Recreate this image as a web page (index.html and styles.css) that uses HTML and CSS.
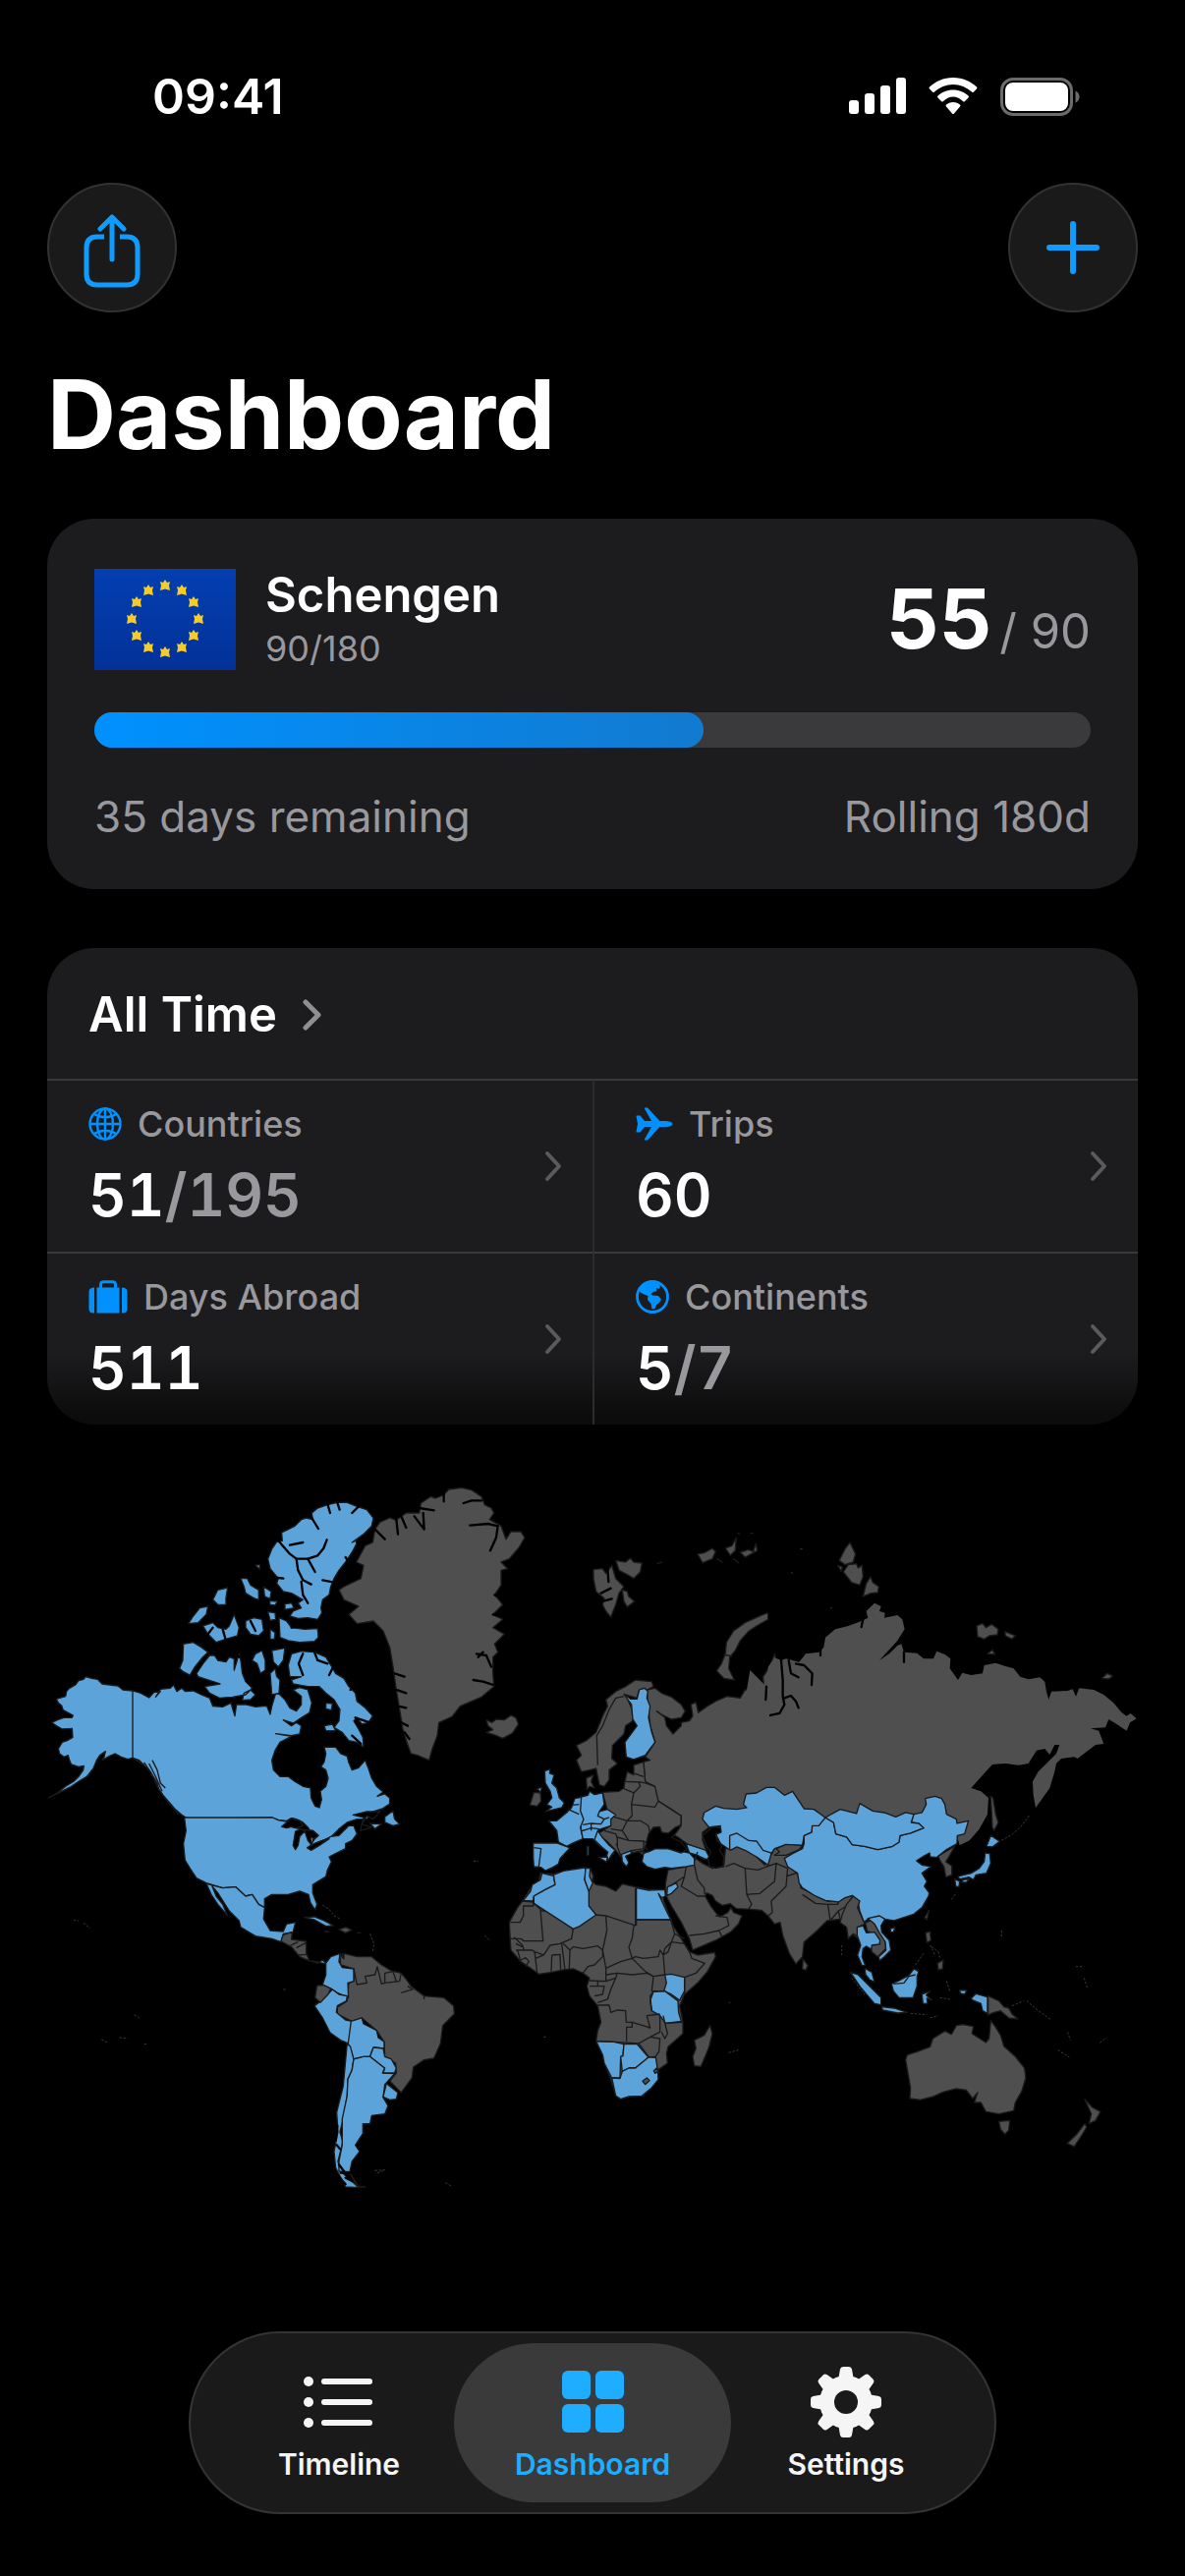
FILE: index.html
```
<!DOCTYPE html>
<html lang="en">
<head>
    <meta charset="UTF-8">
    <meta name="viewport" content="width=device-width, initial-scale=1.0">
    <title>Dashboard</title>
    <link rel="stylesheet" href="styles.css">
</head>
<body>
    <!-- status bar -->
    <div class="status-bar">
        <span class="time">09:41</span>
        <div class="status-icons">
            <svg width="58" height="38" viewBox="0 0 58 38" fill="#fff">
                <rect x="0" y="23" width="10" height="14" rx="3"/>
                <rect x="16" y="16" width="10" height="21" rx="3"/>
                <rect x="32" y="8" width="10" height="29" rx="3"/>
                <rect x="48" y="0" width="10" height="37" rx="3"/>
            </svg>
            <svg width="50" height="38" viewBox="0 0 50 38" fill="#fff">
                <path d="M25 0C35 0 43 4 49 9.500Q50 10.500 49 11.500L46 14.500Q45 15.500 44 14.500C39 10 32 7 25 7S11 10 6 14.500Q5 15.500 4 14.500L1 11.500Q0 10.500 1 9.500C7 4 15 0 25 0Z"/>
                <path d="M25 12.500C31.500 12.500 36.500 15 40.500 18.500Q41.500 19.500 40.500 20.500L37 24Q36 25 35 24C32 21.500 29 19.500 25 19.500S18 21.500 15 24Q14 25 13 24L9.500 20.500Q8.500 19.500 9.500 18.500C13.500 15 18.500 12.500 25 12.500Z"/>
                <path d="M25 25C28 25 30 26 32 27.500Q33 28.500 32 29.500L26 36.500Q25 37.500 24 36.500L18 29.500Q17 28.500 18 27.500C20 26 22 25 25 25Z"/>
            </svg>
            <svg width="82" height="39" viewBox="0 0 82 39">
                <rect x="1.500" y="1.500" width="71" height="36" rx="11.500" fill="none" stroke="#6b6b6b" stroke-width="3"/>
                <rect x="5" y="5" width="64" height="29" rx="8" fill="#fff"/>
                <path d="M76.500 13.500C79 14.500 80.500 16.500 80.500 19.500S79 24.500 76.500 25.500Z" fill="#6b6b6b"/>
            </svg>
        </div>
    </div>

    <!-- toolbar -->
    <header class="toolbar">
        <button class="round-button" aria-label="Share">
            <svg width="60" height="82" viewBox="0 -6 60 82" fill="none" stroke="#109bff" stroke-width="5" stroke-linecap="round" stroke-linejoin="round">
                <path d="M30 47V4M18 16L30 4L42 16"/>
                <path stroke-linecap="butt" d="M22 24H15Q4 24 4 35V62Q4 73 15 73H45Q56 73 56 62V35Q56 24 45 24H38"/>
            </svg>
        </button>
        <button class="round-button" aria-label="Add trip">
            <svg width="54" height="54" viewBox="0 0 54 54" fill="none" stroke="#109bff" stroke-width="6" stroke-linecap="round">
                <path d="M27 3V51M3 27H51"/>
            </svg>
        </button>
    </header>

    <main>
        <h1>Dashboard</h1>

        <section class="card schengen">
            <div class="schengen-top">
                <svg class="flag" width="144" height="103" viewBox="0 0 144 103">
                    <defs>
                        <linearGradient id="flagBlue" x1="0" y1="0" x2="0" y2="1">
                            <stop offset="0" stop-color="#043fb0"/>
                            <stop offset="1" stop-color="#023199"/>
                        </linearGradient>
                        <path id="star" d="M0 -6L2 -3L5 -4L4 0L5 5L0 3.500L-5 5L-4 0L-5 -4L-2 -3Z" fill="#f5cd2a"/>
                    </defs>
                    <rect width="144" height="103" fill="url(#flagBlue)"/>
                    <use href="#star" x="72" y="17"/>
                    <use href="#star" x="89" y="22"/>
                    <use href="#star" x="101" y="34"/>
                    <use href="#star" x="106" y="51"/>
                    <use href="#star" x="101" y="68"/>
                    <use href="#star" x="89" y="80"/>
                    <use href="#star" x="72" y="85"/>
                    <use href="#star" x="55" y="80"/>
                    <use href="#star" x="43" y="68"/>
                    <use href="#star" x="38" y="51"/>
                    <use href="#star" x="43" y="34"/>
                    <use href="#star" x="55" y="22"/>
                </svg>
                <div class="zone">
                    <h2>Schengen</h2>
                    <p>90/180</p>
                </div>
                <div class="used"><strong>55</strong><span>/ 90</span></div>
            </div>
            <div class="progress" role="progressbar" aria-label="Days used" aria-valuenow="55" aria-valuemin="0" aria-valuemax="90">
                <div class="progress-fill" style="width: 61.1%"></div>
            </div>
            <div class="schengen-bottom">
                <span>35 days remaining</span>
                <span>Rolling 180d</span>
            </div>
        </section>

        <section class="card stats">
            <a class="stats-title" href="#">
                <h2>All Time</h2>
                <svg width="20" height="32" viewBox="0 0 20 32" fill="none" stroke="#8e8e93" stroke-width="5" stroke-linecap="round" stroke-linejoin="round"><path d="M3 3L16 16L3 29"/></svg>
            </a>
            <div class="stats-grid">
                <a class="stat" href="#">
                    <div>
                        <p class="stat-label">
                            <svg width="34" height="34" viewBox="0 0 34 34" fill="none" stroke="#0091ff" stroke-width="2.400">
                                <circle cx="17" cy="17" r="15.500"/>
                                <ellipse cx="17" cy="17" rx="8" ry="15.500"/>
                                <path d="M17 1V33M1 17H33M5 6.500Q17 14 29 6.500M5 27.500Q17 20 29 27.500"/>
                            </svg>
                            Countries
                        </p>
                        <p class="stat-value">51<span>/195</span></p>
                    </div>
                    <svg class="chevron" width="20" height="32" viewBox="0 0 20 32"><path d="M4 3L16 16L4 29"/></svg>
                </a>
                <a class="stat" href="#">
                    <div>
                        <p class="stat-label">
                            <svg width="38" height="34" viewBox="0 0 38 34" fill="#0091ff">
                                <path d="M1 8.500H4.500L9 14H16L9 1.500Q8.700 0.500 9.500 0.500H12L24.500 14H31Q37.500 14.500 37.500 17T31 20H24.500L12 33.500H9.500Q8.700 33.500 9 32.500L16 20H9L4.500 25.500H1Q0.500 25.500 0.500 25L2 17L0.500 9Q0.500 8.500 1 8.500Z"/>
                            </svg>
                            Trips
                        </p>
                        <p class="stat-value">60</p>
                    </div>
                    <svg class="chevron" width="20" height="32" viewBox="0 0 20 32"><path d="M4 3L16 16L4 29"/></svg>
                </a>
                <a class="stat" href="#">
                    <div>
                        <p class="stat-label">
                            <svg width="40" height="34" viewBox="0 0 40 34" fill="#0091ff">
                                <path d="M6 7.500V33.500H5Q0.500 33.500 0.500 29V12Q0.500 7.500 6 7.500ZM34 7.500V33.500H35Q39.500 33.500 39.500 29V12Q39.500 7.500 34 7.500ZM8.500 7.500H31.500V33.500H8.500Z"/>
                                <path d="M12.500 8V4.500Q12.500 1.700 15.500 1.700H24.500Q27.500 1.700 27.500 4.500V8" fill="none" stroke="#0091ff" stroke-width="3"/>
                            </svg>
                            Days Abroad
                        </p>
                        <p class="stat-value">511</p>
                    </div>
                    <svg class="chevron" width="20" height="32" viewBox="0 0 20 32"><path d="M4 3L16 16L4 29"/></svg>
                </a>
                <a class="stat" href="#">
                    <div>
                        <p class="stat-label">
                            <svg width="34" height="34" viewBox="0 0 34 34">
                                <circle cx="17" cy="17" r="15.500" fill="none" stroke="#0091ff" stroke-width="2.800"/>
                                <path fill="#0091ff" d="M3 11L8 4L17 1L22 2.500L25 6L24 9L21 8L21.500 11L18 12L15.500 14L17 15.500L23 16L26 19.500L24 23L21 25L19.500 29L16.500 29.500L15.500 24L12 20L12.500 16L9.500 15L5.500 13Z"/>
                            </svg>
                            Continents
                        </p>
                        <p class="stat-value">5<span>/7</span></p>
                    </div>
                    <svg class="chevron" width="20" height="32" viewBox="0 0 20 32"><path d="M4 3L16 16L4 29"/></svg>
                </a>
            </div>
        </section>

        <!-- world map, visited countries are blue -->
        <svg class="map" viewBox="0 0 1110 740" role="img" aria-label="Visited countries">
            <!-- Canada and Alaska -->
            <g transform="translate(-18 -10) scale(.3333)">
                <path class="visited" d="M315,693L285,690 270,678 245,675 222,672 208,658 190,655 172,650 165,658 150,662 140,675 122,685 113,695 110,710 82,718 88,730 98,738 103,752 118,760 133,768 130,775 105,775 85,782 68,790 82,800 100,810 130,808 132,835 115,845 100,850 88,870 92,885 105,895 118,890 122,905 128,918 150,925 166,922 164,935 150,955 135,970 110,985 85,1005 58,1020 95,1002 125,987 150,970 175,955 195,930 205,905 215,890 232,878 228,895 222,905 245,892 262,885 280,895 300,902 315,898 335,905 350,920 365,935 378,955 390,975 395,995 410,1015 428,1035 445,1055 465,1072 485,1085 740,1080 760,1088 785,1090 800,1082 815,1085 835,1095 850,1110 860,1125 875,1135 868,1150 850,1170 885,1155 920,1140 945,1115 970,1095 1000,1085 1030,1085 1050,1062 1080,1052 1100,1038 1100,1020 1085,1008 1062,1015 1080,1002 1060,985 1045,960 1035,930 1025,905 1005,928 985,935 975,912 970,893 950,885 935,865 900,865 905,885 900,910 890,925 905,935 912,960 905,985 888,1000 892,1025 885,1050 872,1045 860,1020 858,990 835,985 810,970 790,955 765,955 745,935 740,905 750,875 765,850 800,832 752,824 800,830 825,825 830,800 815,790 800,800 775,782 805,792 835,772 855,760 862,730 850,690 825,683 805,690 830,710 830,735 815,755 795,745 780,720 765,705 752,700 740,740 735,765 725,740 715,740 690,742 660,735 632,735 627,770 615,730 590,742 560,740 550,715 525,705 500,693 475,695 465,685 450,695 440,675 430,685 400,688 385,712 400,695 380,698 365,714 340,700Z"/>
                <path class="visited" d="M770,210L790,200 810,190 830,170 845,165 865,170 862,150 880,135 910,125 940,118 970,118 1000,130 1030,140 1050,165 1045,190 1020,215 985,240 1005,232 985,270 965,300 945,325 930,350 920,375 915,400 895,415 890,440 893,455 880,475 850,470 820,472 795,465 805,450 830,440 820,425 835,415 800,395 775,390 755,365 760,350 735,320 728,290 740,260 755,238 772,235Z"/>
                <path class="visited" d="M762,470L785,480 800,500 840,505 880,503 882,530 870,542 825,545 790,540 765,530ZM510,640L530,610 550,585 565,585 575,600 600,605 610,590 625,595 625,630 640,580 645,600 650,640 660,665 680,685 660,705 620,712 580,715 550,700 535,680 582,672 545,660 515,650ZM470,550L500,545 525,560 545,575 525,595 505,620 490,645 470,635 458,625 468,600ZM530,495L560,485 575,500 600,505 610,495 625,460 640,500 635,525 600,535 570,545 545,520ZM485,488L500,465 520,440 545,435 540,460 515,485ZM660,480L685,470 710,475 715,510 700,525 675,520 660,500ZM735,505L750,515 748,535 735,535ZM645,350L665,350 675,370 700,385 700,415 685,410 660,395 655,375ZM575,385L605,378 600,410 600,430 575,430 560,415ZM715,375L738,390 735,412 718,405ZM690,310L703,308 703,322ZM728,452L750,455 752,475 735,478ZM733,418L757,420 750,432 735,430ZM780,428L800,425 808,440 780,445ZM740,570L780,562 775,600 760,620 745,605ZM690,580L710,570 720,600 720,630 705,640 695,610 680,600ZM735,640L750,625 755,650 765,660 762,700 740,705ZM655,700L675,690 690,705 675,720 650,722Z"/>
                <path class="visited" d="M800,580L830,572 870,575 905,590 920,615 935,640 960,655 975,680 995,700 1000,725 1025,745 1048,770 1035,790 1015,795 1000,775 990,785 1005,810 1018,835 1020,865 1000,850 975,845 955,820 930,805 945,785 948,750 930,720 905,700 885,680 850,680 805,672 800,660 830,650 795,650 790,615ZM905,730L925,732 922,752 905,748ZM900,800L925,795 935,815 905,815ZM1085,1078L1110,1060 1115,1085 1130,1100 1110,1105 1085,1095ZM1040,1098L1075,1100 1055,1115Z"/>
                <path class="water" stroke-width="11" d="M760,235L795,275 815,290 850,290 880,280 898,258 908,232M640,590L625,575 600,590M745,560H800"/>
                <path class="water" stroke-width="6" d="M850,290L872,330M815,290L820,325 835,355 860,368M830,360L835,400 850,425M862,165L882,198M795,248L835,240M910,122L918,150M940,118L947,140M985,150L1005,130M1000,240L1040,205M965,285L975,300M895,355L930,362M735,345L775,350M800,500L860,490M835,580L822,610 835,645M870,575L880,600 910,610M925,625L915,645M980,690L990,680M560,500L545,520M600,540L590,505M675,480L690,510M995,775L1040,790M985,830L1012,855"/>
                <path class="sea" d="M770,1108L785,1095 800,1082 825,1090 835,1105 815,1112 800,1108 785,1112ZM812,1122L830,1115 840,1122 825,1138 820,1165 812,1178 805,1165ZM840,1118L865,1120 882,1135 870,1145 858,1140 862,1165 850,1150 845,1135ZM848,1172L870,1160 890,1152 915,1145 885,1165 860,1180ZM988,1072L1030,1062 1070,1062 1050,1085 1030,1075 1015,1100 1045,1110 1010,1120 1020,1080Z"/>
                <path class="border" d="M315,693V898L350,920M375,905L390,935 400,975 415,990M365,915L385,955 405,1000M350,912L372,945 390,985 420,1030 455,1070"/>
            </g>
            <!-- USA, Central and South America -->
            <g transform="translate(-18 350) scale(.3333)">
                <path class="visited" d="M473,0L742,0 760,8 785,12 805,30 850,40 870,55 862,80 850,95 885,78 920,58 945,55 975,25 990,25 1000,50 985,70 965,80 965,95 935,110 915,120 922,135 910,160 905,180 865,205 865,230 878,265 872,282 858,260 852,235 825,225 790,235 740,235 718,248 718,275 700,265 680,235 660,240 630,212 590,215 540,200 510,185 490,155 475,130 470,80 478,40Z"/>
                <path class="sea" d="M770,28L785,15 800,2 825,10 835,25 815,32 800,28 785,32ZM812,42L830,35 840,42 825,58 820,85 812,98 805,85ZM840,38L865,40 882,55 870,65 858,60 862,85 850,70 845,55ZM848,92L870,80 890,72 915,65 885,85 860,100Z"/>
                <path class="visited" d="M540,202L590,215 630,212 660,240 680,235 700,265 718,275 715,310 735,345 775,348 785,325 812,320 805,350 775,355 768,380 740,370 690,362 645,335 640,315 610,285 575,230 558,210 570,240 590,265 605,300 575,265 555,235Z"/>
                <path class="other" d="M768,378L775,358 802,350 800,372 845,378 845,415 855,438 825,425 800,395ZM795,392L820,380M815,398L845,382M820,420L845,418M945,342L965,335 985,343 965,352ZM900,348H915M1000,352H1012"/>
                <path class="visited" d="M858,438L880,445 895,435 908,448 880,441ZM840,305L870,303 900,315 928,330 905,332 870,312Z"/>
                <path class="other" d="M948,415L960,432 960,415 1000,425 1045,425 1075,450 1105,468 1135,475 1155,500 1165,515 1205,545 1265,550 1295,575 1297,600 1262,635 1255,690 1235,735 1205,740 1172,762 1168,795 1135,840 1100,805 1120,780 1118,750 1085,730 1083,685 1060,650 1015,612 985,622 940,600 940,580 970,560 975,505 990,500 990,462 950,450Z"/>
                <path class="visited" d="M905,445L920,425 948,415 945,440 955,458 990,462 990,500 972,505 974,550 940,535 920,522 895,510 905,480Z"/>
                <path class="visited" d="M925,525L945,540 970,545 968,560 940,575 937,595 965,618 985,622 983,655 973,690 950,680 918,657 895,612 870,575 890,560Z"/>
                <path class="other" d="M878,513L898,512 920,522 912,540 888,565 872,550Z"/>
                <path class="visited" d="M982,622L1015,612 1020,630 1060,650 1065,672 1083,685 1083,705 1050,702 1040,730 1020,730 990,738 973,690Z"/>
                <path class="visited" d="M970,690L980,700 990,738 985,770 972,800 970,850 958,920 948,960 957,990 942,1050 950,1080 1005,1130 965,1128 935,1070 930,1020 942,960 938,900 958,820Z"/>
                <path class="visited" d="M990,738L1020,730 1040,730 1085,765 1078,780 1115,782 1085,815 1080,855 1095,880 1085,905 1045,910 1040,935 1018,935 1018,965 995,1000 1008,1020 985,1050 978,1082 945,1080 945,1050 955,1000 955,920 970,850 972,800 985,770Z"/>
                <path class="visited" d="M1040,730L1050,702 1080,705 1085,730 1105,738 1120,765 1115,780 1080,780 1085,765ZM1090,812L1125,840 1120,860 1100,862 1080,853ZM980,1088L1005,1128 1025,1128 1000,1125Z"/>
                <path class="border" d="M990,462L1000,510 1030,505 1025,485 1055,480 1062,455M1062,455L1075,508 1085,505 1085,475 1110,470M1085,505L1130,500 1135,475M1110,470L1120,500M1135,535L1170,525 1155,515M1205,545V555M955,430V415"/>
                <path class="water" stroke-width="5" d="M940,940L935,985M938,1000L948,1012M945,1060L975,1100M930,1080L965,1120M950,1085H975M965,1100L985,1110"/>
                <path class="islands" d="M135,312L150,316M165,322L185,338M895,268L915,280 930,300 950,310M1040,355L1052,385 1048,410M775,525H785M1055,1078L1085,1076 1065,1085ZM1270,1115L1288,1125M275,672L300,675M220,678L240,688M320,602L335,612M350,692H362"/>
            </g>
            <!-- Greenland, arctic islands, Europe -->
            <g transform="translate(352 -10) scale(.3333)">
                <path class="other" d="M-55,200L-40,178 -10,165 10,172 40,150 80,150 85,120 115,100 130,105 155,95 170,78 210,73 240,80 270,100 280,125 300,135 308,150 295,170 330,190 345,230 360,207 390,207 402,225 385,255 355,290 330,300 350,320 330,325 330,370 310,400 335,430 305,460 335,475 305,500 340,520 310,550 320,575 305,590 305,640 308,680 270,712 240,725 205,740 180,772 140,790 135,830 120,870 110,905 75,890 55,885 42,850 30,810 20,750 10,690 0,620 -10,560 -30,510 -60,480 -110,488 -135,460 -105,435 -150,415 -165,385 -150,375 -98,350 -90,310 -112,300 -85,250 -62,240Z"/>
                <path class="water" stroke-width="7" d="M10,170L15,215M25,160L40,195M65,160L95,200 92,150M80,135L125,142M155,90V115M215,120L240,112 270,112M235,188L290,183 320,190 315,225 297,265M255,580L285,585 300,620M245,660L275,665 305,675M260,590L275,575M-55,200L-25,230M5,640L35,650M10,690L40,700M15,740L40,745M25,790L45,800M35,820L50,840M310,400L335,410M305,460L325,465"/>
                <path class="other" d="M285,782L302,790 315,780 340,782 360,768 375,775 383,795 365,822 335,838 310,828 285,820 305,812 290,800Z"/>
                <path class="other" d="M612,322L640,320 650,335 668,310 680,350 705,375 690,395 680,430 665,468 650,450 640,430 645,410 620,390 612,350ZM680,295L710,300 725,288 735,300 760,303 755,330 735,350 715,338 690,325ZM700,385L715,390 720,405 737,420 715,437 705,420ZM930,275L950,272 975,258 985,268 975,290 945,302ZM1015,258L1035,250 1048,225 1045,265 1030,280ZM1060,270L1085,262 1100,268 1108,243 1112,265 1075,285ZM990,290L1005,300ZM1040,290L1055,302ZM1050,210L1060,215M1090,212H1100M805,305L822,300"/>
                <path class="water" stroke-width="6" d="M655,320L658,360M635,395L665,380M640,420L668,412"/>
                <path class="other" d="M1130,460L1145,455 1145,475 1110,495 1085,512 1060,540 1045,570 1028,590 1025,625 1042,660 1010,655 988,632 1003,610 1015,580 1018,545 1040,510 1075,485Z"/>
                <path class="border" d="M1010,582L1035,588"/>
                <!-- Russia west of the Urals -->
                <path class="other" d="M775,690L800,685 820,700 850,712 880,735 892,755 880,775 850,780 820,765 805,755 830,775 835,800 855,825 880,800 880,790 905,785 915,770 910,735 925,728 932,760 960,740 985,725 1020,710 1060,715 1075,690 1100,690 1125,710 1145,725 1133,690 1130,650 1150,620 1160,595 1165,580 1170,600 1185,605 1190,650 1190,700 1260,620 1260,1080 1110,1080 965,1110 945,1125 945,1150 958,1185 900,1162 870,1140 850,1130 830,1128 880,1100 880,1075 830,1060 800,1040 770,970 765,910 785,905 770,895 800,850 785,800 780,750Z"/>
                <path class="other" d="M560,860L590,845 620,820 640,770 655,740 650,720 680,695 710,680 740,660 790,665 795,680 775,690 765,685 750,695 745,715 710,705 730,750 732,785 710,800 705,825 690,840 670,860 668,900 685,915 660,935 660,965 645,985 630,980 620,930 600,935 575,940 560,905 575,890Z"/>
                <path class="border" d="M625,920L622,830 640,800 660,750 680,715 705,710"/>
                <path class="visited" d="M705,703L725,718 745,718 752,690 768,685 778,695 775,715 785,740 780,775 790,820 800,850 770,890 735,903 712,895 708,850 745,800 732,780 728,735Z"/>
                <path class="other" d="M590,960L612,950 605,970 615,990 600,985 592,995Z"/>
                <path class="visited" d="M463,938L480,932 478,945 492,950 485,975 500,990 508,1020 523,1035 515,1050 465,1062 485,1048 470,1040 485,1020 480,1000 465,975ZM440,992L455,988 450,1002Z"/>
                <path class="other" d="M430,1003L450,1005 452,1030 440,1045 418,1042Z"/>
                <!-- Eastern Europe and the Balkans -->
                <path class="other" d="M640,1003L690,1000 705,990 708,970 715,940 735,950 735,920 765,910 770,970 800,985 810,1030 880,1075 880,1100 850,1125 865,1120 835,1140 810,1115 790,1125 778,1150 765,1180 720,1190 695,1200 680,1180 650,1150 625,1130 665,1105 655,1060Z"/>
                <path class="border" d="M710,970L755,972 770,975M735,945L765,955M705,992L735,1005 755,985 750,972M735,1005L728,1040 730,1075 715,1090 665,1075M728,1040L800,1048 810,1030M770,975L800,985M810,1030L850,1055 880,1075 880,1100M715,1090L755,1090 780,1105 785,1130M715,1090L700,1120 665,1115M700,1120L720,1150 775,1155M645,1120L680,1130 690,1155 680,1165M690,1155L720,1160 715,1190"/>
                <path class="visited" d="M570,1018L595,1012 600,1000 615,1010 640,1005 645,1040 630,1062 655,1055 680,1072 665,1085 665,1105 635,1115 605,1120 575,1120 568,1070Z"/>
                <path class="visited" d="M475,1090L500,1090 530,1065 545,1050 555,1022 575,1018 572,1060 582,1085 572,1110 580,1145 550,1158 530,1168 505,1155 500,1120Z"/>
                <path class="visited" d="M575,1122L605,1112 628,1115 625,1130 635,1150 658,1175 675,1190 660,1200 655,1185 628,1165 610,1145 580,1145ZM592,1168H597V1195H592Z"/>
                <path class="border" d="M568,1070L535,1055M630,1062L625,1075 645,1085 660,1080M645,1085L635,1100 605,1098 580,1102M605,1098V1120M568,1040L545,1042"/>
            </g>
            <!-- Africa, Middle East, India -->
            <g transform="translate(432 350) scale(.3333)">
                <path class="visited" d="M188,78L260,78 300,93 270,125 265,142 248,152 225,162 212,152 190,150 188,120Z"/>
                <path class="border" d="M190,92L212,95 205,150"/>
                <path class="other" d="M445,60L480,70 525,72 525,95 485,102 455,115 445,90Z"/>
                <path class="visited" d="M458,112L490,100 485,112 470,118 480,138 472,150 460,135Z"/>
                <path class="visited" d="M385,40L400,62 420,85 438,100 428,112 418,130 412,118 416,106 395,88 375,68ZM388,122L415,120 412,136Z"/>
                <path class="other" d="M600,160L655,150 685,125 705,140 735,155 770,150 775,95 800,95 810,85 850,100 895,145 925,95 960,82 1010,85 1000,110 965,130 1000,180 1005,215 1085,255 1165,238 1185,260 1180,290 1195,330 1175,345 1180,370 1160,355 1150,370 1145,335 1125,310 1085,315 1055,345 1015,380 1010,425 990,447 970,415 950,360 942,320 925,325 905,300 885,283 850,280 808,278 790,263 765,268 745,255 735,238 718,230 713,240 730,270 745,290 758,303 782,290 792,275 800,290 825,300 815,325 790,350 745,375 675,405 665,370 640,320 610,270 592,235 592,200Z"/>
                <path class="visited" d="M525,110L560,95 600,95 650,105 665,108 680,125 680,145 655,150 610,155 590,152 560,158 535,150 520,135ZM655,80L700,95 715,100 728,125 710,128 690,115 665,108ZM510,105L530,105 520,112Z"/>
                <path class="visited" d="M598,212L625,200 630,212 610,232 596,238Z"/>
                <path class="border" d="M655,150L650,180 605,210M650,180L640,210 690,240 712,240M680,145L690,190 710,215 712,235M835,155L800,140 775,150M835,155L840,235 855,265 845,280M835,155L875,160 900,150 930,140 925,195 880,232 840,235M930,140L965,155 960,210 915,255 918,290 905,300M960,180L990,170M1010,235L1050,262 1085,265 1118,265 1120,255 1085,255M1088,265L1095,315 1120,285 1125,310M1120,285L1145,270 1165,240M1130,305L1150,275M665,360L710,355 755,345 785,330 780,305 745,300M755,345L765,365M680,130L690,105M700,120L715,128"/>
                <path class="other" d="M1012,432L1027,452 1020,466 1010,462Z"/>
                <path class="other" d="M210,170L250,172 280,165 345,153 362,155 372,180 368,195 380,205 410,210 440,225 460,203 500,212 540,220 575,220 590,222 585,250 600,290 615,330 640,370 665,410 690,420 742,412 745,425 720,470 690,505 650,540 635,575 640,600 645,625 645,660 600,700 595,720 598,750 570,770 568,800 550,825 520,850 480,852 455,860 440,850 425,800 405,750 400,725 380,683 385,650 395,625 385,575 360,545 352,515 360,490 340,475 310,462 280,465 240,473 205,478 180,460 150,440 120,405 118,380 115,320 140,275 155,255 180,215 205,195Z"/>
                <path class="visited" d="M215,170L250,178 255,205 225,220 190,240 188,255 158,253 180,225 185,205 210,190Z"/>
                <path class="visited" d="M250,175L280,163 345,153 350,160 345,190 358,225 358,270 380,297 330,332 310,340 190,262 190,240 225,220 255,205Z"/>
                <path class="visited" d="M348,155L362,155 360,180 370,200 358,225 345,190Z"/>
                <path class="visited" d="M503,215L540,222 590,220 592,240 580,245 570,232 590,275 608,312 503,312Z"/>
                <path class="visited" d="M590,480L610,478 650,488 650,530 635,558 610,540 587,530 595,505Z"/>
                <path class="visited" d="M555,532L590,530 630,560 632,595 640,622 592,628 575,605 550,590 545,560Z"/>
                <path class="visited" d="M380,683L435,685 465,692 462,728 455,730 453,795 428,795 405,750 400,725Z"/>
                <path class="visited" d="M465,692L505,692 540,732 500,765 480,765 460,775 455,730 462,728Z"/>
                <path class="visited" d="M428,795L453,797 460,775 480,765 500,765 540,732 562,732 568,770 570,800 550,825 520,850 480,852 455,860 440,850Z"/>
                <path class="other" d="M522,805L535,795 543,803 530,815ZM556,773L565,765 570,775 560,781Z"/>
                <path class="border" d="M155,255L188,258V270H158V300L148,320H118M190,262L210,280 218,377 160,377 150,370 118,370M210,285H225M310,340L305,370 270,385 240,390 220,420 192,410 185,405 135,405M380,297L410,300 413,345 400,405M410,300L500,330V215M495,330L490,370 480,395 490,430 455,440 410,460 400,405 385,392 340,400 310,395 300,405 280,385M608,312H503V330M608,312L620,355 610,380 590,400 585,420 575,405 570,425 525,430 500,425 490,430M585,420L590,480 555,485 530,470 500,440 490,430M610,380L650,385 665,410 672,430 712,445 685,475 650,488M610,380L600,410 585,420M650,488V540M555,485L535,475 490,480 445,475 440,490 425,525 415,555 385,565M445,475L410,480 410,460M360,498L410,500 410,480M410,500L440,490M360,515H385V500M385,515L405,515 400,540 375,545M300,405L298,465M275,385L285,465M245,420L270,418 272,465M245,420L243,470M220,420L195,430 200,475M192,410L195,430M150,435L165,428 175,440 165,455M135,385L155,395M130,365L155,390 160,405M340,475L355,455 375,450 400,425 400,405M385,573H420L425,595 445,588 470,590 472,625 490,625V640H473V683M380,683L435,685 510,690M490,625L545,642 535,605 575,600M510,690L545,670 575,655 575,605M545,642L535,640M585,605L598,660 590,675 580,655M545,670L575,675 572,715 560,732 540,730 510,690M555,532L545,545 550,590M555,485L550,530 587,530M590,628L645,625M140,405L150,440M620,355L650,370"/>
                <path class="other" d="M728,635L735,660 725,700 715,725 700,760 680,758 675,730 685,705 680,680 710,665Z"/>
                <path class="sea" d="M530,90L540,50 555,30 575,28 580,45 600,48 625,28 640,25 622,50 610,60 640,75 658,98 640,108 600,95 560,95 540,105Z"/>
                <path class="islands" d="M5,133H20M40,360L55,375M785,565H790M220,670H228M785,718L815,710"/>
            </g>
            <!-- Russia east of the Urals, China, Mongolia, Japan -->
            <g transform="translate(732 40) scale(.3333)">
                <path class="other plain" d="M-50,480L0,530 5,470 25,442 45,450 60,445 100,455 120,430 160,425 175,410 180,380 210,355 250,345 290,330 310,320 305,300 330,275 350,285 345,300 362,305 360,320 400,312 415,325 422,355 400,390 345,450 375,430 400,405 412,400 420,425 460,428 480,445 510,445 520,422 545,432 562,445 560,475 585,510 598,488 625,495 660,490 665,465 700,458 730,468 755,475 775,500 800,508 835,502 850,515 855,545 862,570 870,545 920,543 935,538 945,560 955,535 1000,540 1030,555 1060,580 1085,610 1100,620 1112,612 1130,628 1110,640 1100,665 1070,645 1045,630 1035,655 990,658 1015,665 1030,705 1005,708 950,750 940,745 900,750 885,765 880,790 865,840 840,875 822,900 815,860 813,820 830,790 855,765 885,735 895,708 880,708 865,738 850,720 825,725 800,765 770,770 730,765 690,768 665,795 625,840 655,850 678,870 675,920 650,965 620,1000 590,1015 583,990 560,940 520,900 400,950 180,950 -20,900 -120,900Z"/>
                <path class="water" stroke-width="14" d="M45,450L50,510 50,560 55,585 40,612 12,618M0,530L-2,570"/>
                <path class="water" stroke-width="7" d="M55,565L75,558 90,575 98,595M68,450L75,490 98,502M90,460L115,465 140,490 138,525M165,400V435M295,325L290,348M420,425V455"/>
                <path class="other" d="M685,865L692,870 700,920 708,945 695,970 690,960 688,920ZM240,110L255,90 272,125 265,150 240,158 222,145ZM235,180L250,158 275,155 280,168 292,160 295,195 285,220 260,212ZM295,255L305,215 318,195 325,212 343,225 340,243 320,245ZM218,160L232,165 228,178ZM642,345L660,337 670,350 688,340 708,355 705,372 680,375 665,385 645,378ZM728,362L760,375 750,385 730,375ZM675,430L690,418 698,432ZM1025,505L1040,490 1058,498 1045,507Z"/>
                <path class="visited" d="M180,930L205,945 212,980 245,990 262,1013 300,1018 340,1028 385,1018 405,1005 408,985 440,978 480,962 465,948 442,945 450,920 475,915 488,890 485,872 515,865 535,872 545,890 550,920 580,935 582,948 617,940 605,980 583,985 582,1010 550,1028 520,1052 500,1050 498,1038 480,1048 458,1062 475,1075 502,1080 475,1100 490,1125 482,1140 497,1160 495,1170 475,1205 450,1225 420,1235 390,1245 360,1240 345,1232 310,1240 298,1250 285,1215 280,1190 262,1168 240,1175 220,1188 180,1183 150,1170 110,1145 100,1130 95,1100 65,1080 55,1055 80,1040 110,1025 115,1010 115,985 138,975 140,955 160,955 165,938ZM378,1270L393,1265 388,1280 380,1280Z"/>
                <path class="visited" d="M180,930L225,905 275,918 285,887 325,910 360,915 395,928 425,915 450,920 442,945 465,948 480,962 440,978 408,985 405,1005 385,1018 340,1028 300,1018 262,1013 245,990 212,980 205,945Z"/>
                <path class="other" d="M525,1048L575,1018 560,1045 548,1065 566,1078 566,1105 548,1112 542,1080 530,1062Z"/>
                <path class="visited" d="M685,985L712,1003 690,1020 672,1018ZM668,1038L682,1040 685,1070 672,1100 640,1105 632,1120 618,1112 590,1118 585,1110 625,1100 650,1085 665,1065ZM575,1118L590,1125 588,1142 578,1140ZM600,1120L620,1118 610,1128 598,1128Z"/>
                <path class="islands" d="M718,1000L750,982 780,955 805,920M565,1180L580,1160M195,290H200M75,182L85,185M103,110H112"/>
            </g>
            <!-- Kazakhstan, Uzbekistan and the Caspian Sea -->
            <g transform="translate(352 -10) scale(.3333)">
                <path class="visited" d="M945,1085L950,1065 985,1045 1010,1052 1050,1055 1080,1050 1070,1040 1078,1008 1110,1005 1140,988 1165,988 1195,1012 1220,1000 1255,1053 1285,1055 1320,1080 1300,1105 1280,1105 1278,1125 1255,1135 1250,1165 1200,1163 1165,1175 1155,1190 1145,1225 1110,1200 1075,1180 1050,1170 1030,1180 1000,1160 985,1130 1000,1105 965,1110Z"/>
                <path class="other" d="M1170,1175L1200,1162 1250,1165 1240,1178 1200,1195 1165,1195 1180,1185Z"/>
                <path class="border" d="M1028,1180V1135L1050,1128 1085,1150 1110,1152 1130,1180 1160,1190"/>
                <path class="sea" d="M945,1135L965,1118 975,1108 1000,1110 1002,1125 985,1132 990,1150 1005,1165 998,1180 1010,1200 1008,1228 985,1235 965,1228 962,1205 970,1185 958,1170Z"/>
            </g>
            <!-- South-east Asia and Oceania -->
            <g transform="translate(752 380) scale(.3333)">
                <path class="other" d="M165,230L172,205 185,175 205,150 225,165 218,185 240,235 218,245 222,275 205,265 190,280 185,245Z"/>
                <path class="other" d="M242,232L262,222 280,245 302,275 305,310 280,335 262,320 258,300 287,295 270,262 248,258Z"/>
                <path class="visited" d="M217,245L235,240 245,262 270,260 287,285 285,297 262,300 260,312 245,303 235,310 232,335 242,362 232,362 218,330 228,300 217,270Z"/>
                <path class="visited" d="M250,218L285,210 302,220 290,240 292,260 315,285 320,315 300,335 285,347 283,335 305,315 303,290 285,262 270,235Z"/>
                <path class="visited" d="M240,370L262,382 270,412 255,405 243,390ZM197,383L220,390 250,420 275,445 290,460 290,482 270,478 250,455 225,425ZM292,488L330,492 370,505 340,507 295,498ZM322,418L345,408 375,392 390,372 405,380 400,395 400,425 388,460 345,460 328,440ZM415,450L440,440 428,452 445,468 430,462 432,478 418,478ZM530,437L552,438 545,450 532,447ZM565,462L580,448 615,458 615,508 600,500 595,478 570,468Z"/>
                <path class="border" d="M328,418L360,415 375,395 395,390"/>
                <path class="other" d="M617,455L650,470 665,488 680,492 690,510 708,525 680,522 655,500 635,505 617,513ZM426,262L440,258 442,285 430,292ZM462,355L480,345 478,372 465,375ZM423,215L437,193 430,222Z"/>
                <path class="other" d="M365,650L370,635 400,625 440,610 448,585 485,562 505,572 520,545 540,542 572,548 568,570 610,597 620,585 625,530 640,550 655,575 665,608 700,640 728,675 732,705 720,745 700,780 695,805 650,815 610,808 595,780 575,780 585,750 570,768 550,742 520,738 480,748 450,762 410,772 378,768 380,735ZM650,838L683,835 680,865 668,877 655,862ZM912,770L935,795 960,808 945,835 925,845 932,815ZM912,845L918,855 900,885 880,915 858,905 885,880Z"/>
                <path class="islands" d="M170,300V330M380,508L430,512M440,522L465,515M470,460L500,465M490,410L500,440M395,360L420,325M445,305L465,320 470,340M440,300L455,330M690,485L725,470M735,470L770,500 810,528M860,565L868,590M830,620L865,642M958,598L978,582M885,365H905M910,400L920,430M658,255V280M200,400L240,450"/>
            </g>
        </svg>
    </main>

    <nav class="tab-bar">
        <a class="tab" href="#">
            <svg width="72" height="72" viewBox="0 0 72 72" fill="#f5f5f5">
                <circle cx="5" cy="15" r="5"/><circle cx="5" cy="36" r="5"/><circle cx="5" cy="57" r="5"/>
                <rect x="18" y="12" width="52" height="6" rx="3"/><rect x="18" y="33" width="52" height="6" rx="3"/><rect x="18" y="54" width="52" height="6" rx="3"/>
            </svg>
            Timeline
        </a>
        <a class="tab active" href="#">
            <svg width="72" height="72" viewBox="0 0 72 72" fill="#1eadff">
                <rect x="5" y="4" width="29" height="29" rx="6"/><rect x="39" y="4" width="29" height="29" rx="6"/>
                <rect x="5" y="38" width="29" height="29" rx="6"/><rect x="39" y="38" width="29" height="29" rx="6"/>
            </svg>
            Dashboard
        </a>
        <a class="tab" href="#">
            <svg width="72" height="72" viewBox="0 0 72 72">
                <g fill="#f5f5f5">
                    <g id="teeth">
                        <path id="tooth" d="M28 14L30 2.500Q30.500 0 33 0H39Q41.500 0 42 2.500L44 14V58L42 69.500Q41.500 72 39 72H33Q30.500 72 30 69.500L28 58Z"/>
                        <use href="#tooth" transform="rotate(90 36 36)"/>
                    </g>
                    <use href="#teeth" transform="rotate(45 36 36)"/>
                    <circle cx="36" cy="36" r="27"/>
                </g>
                <circle cx="36" cy="36" r="12" fill="#1a1a1a"/>
            </svg>
            Settings
        </a>
    </nav>
</body>
</html>
```
FILE: styles.css
```
* {
    box-sizing: border-box;
}

body {
    margin: 0;
    min-height: 100vh;
    display: flex;
    flex-direction: column;
    background-color: #000;
    color: #fff;
    font-family: Inter, "Liberation Sans", sans-serif;
}

h1, h2, p {
    margin: 0;
}

a {
    color: inherit;
    text-decoration: none;
}

svg {
    display: block;
    flex-shrink: 0;
}

.status-bar {
    display: flex;
    justify-content: space-between;
    align-items: center;
    height: 186px;
    padding: 10px 106px 0 155px;
}

.time {
    font-size: 50px;
    font-weight: 600;
}

.status-icons {
    display: flex;
    align-items: center;
    gap: 23px;
}

.toolbar {
    display: flex;
    justify-content: space-between;
    padding: 0 48px;
}

.round-button {
    display: flex;
    align-items: center;
    justify-content: center;
    width: 132px;
    height: 132px;
    padding: 0;
    border: 2px solid #323232;
    border-radius: 50%;
    background-color: #1a1a1a;
}

main {
    padding: 0 48px;
}

h1 {
    margin: 44px 0 46px;
    font-size: 97px;
    line-height: 120px;
    font-weight: 700;
}

h2 {
    font-size: 49px;
    line-height: 60px;
    font-weight: 600;
}

.card {
    border-radius: 48px;
    background-color: #1c1c1e;
    overflow: hidden;
}

.schengen {
    padding: 48px 48px 44px;
}

.schengen-top {
    display: flex;
    align-items: center;
    height: 108px;
}

.zone {
    margin-left: 30px;
}

.zone p {
    font-size: 36px;
    line-height: 48px;
    color: #98989d;
}

.used {
    display: flex;
    align-items: baseline;
    gap: 8px;
    margin-left: auto;
    color: #98989d;
    font-size: 49px;
}

.used strong {
    font-size: 84px;
    line-height: 100px;
    color: #fff;
}

.progress {
    height: 36px;
    margin-top: 41px;
    border-radius: 18px;
    background-color: #3a3a3c;
}

.progress-fill {
    height: 100%;
    border-radius: 18px;
    background: linear-gradient(to right, #0091ff, #127acf);
}

.schengen-bottom {
    display: flex;
    justify-content: space-between;
    margin-top: 40px;
    font-size: 44px;
    line-height: 60px;
    color: #98989d;
}

.stats {
    margin-top: 60px;
    background: linear-gradient(to bottom, #1c1c1e 85%, #0c0c0d 98%);
}

.stats-title {
    display: flex;
    align-items: center;
    gap: 26px;
    height: 133px;
    padding: 2px 42px 0;
}

.stats-grid {
    display: grid;
    grid-template-columns: 1fr 1fr;
}

.stat {
    display: flex;
    align-items: center;
    justify-content: space-between;
    height: 176px;
    padding: 0 30px 0 42px;
    border-top: 2px solid #39393b;
}

.stat:nth-child(even) {
    border-left: 2px solid #2c2c2e;
}

.stat-label {
    display: flex;
    align-items: center;
    gap: 16px;
    font-size: 36px;
    line-height: 44px;
    font-weight: 500;
    color: #98989d;
}

.stat-value {
    margin-top: 14px;
    font-size: 60px;
    line-height: 72px;
    font-weight: 600;
    font-variant-numeric: tabular-nums;
}

.stat-value span {
    color: #98989d;
}

.chevron {
    fill: none;
    stroke: #5a5a5e;
    stroke-width: 4px;
    stroke-linecap: round;
    stroke-linejoin: round;
}

.map {
    width: 100%;
    margin-top: 50px;
}

.map path {
    stroke: #1a1a1a;
    stroke-width: 4px;
    stroke-linejoin: round;
}

.map .visited {
    fill: #5ca3d9;
}

.map .other {
    fill: #4f4f4f;
}

.map .plain {
    stroke: none;
}

.map .border {
    fill: none;
    stroke-width: 4px;
}

.map .water {
    fill: none;
    stroke: #000;
    stroke-width: 7px;
    stroke-linecap: round;
}

.map .sea {
    fill: #000;
}

.map .islands {
    fill: none;
    stroke: #3a3a3a;
    stroke-width: 3px;
    stroke-dasharray: 7 5;
}

.tab-bar {
    display: grid;
    grid-template-columns: repeat(3, 1fr);
    width: 822px;
    max-width: 100%;
    height: 186px;
    margin: auto auto 63px;
    padding: 10px 22px;
    border: 2px solid #343434;
    border-radius: 93px;
    background-color: #1a1a1a;
}

.tab {
    display: flex;
    flex-direction: column;
    align-items: center;
    justify-content: center;
    gap: 9px;
    padding-top: 2px;
    font-size: 30px;
    line-height: 36px;
    font-weight: 600;
    color: #f5f5f5;
}

.tab.active {
    margin: 0 -12px;
    border-radius: 81px;
    background-color: #3a3a3a;
    color: #1eadff;
}
```
